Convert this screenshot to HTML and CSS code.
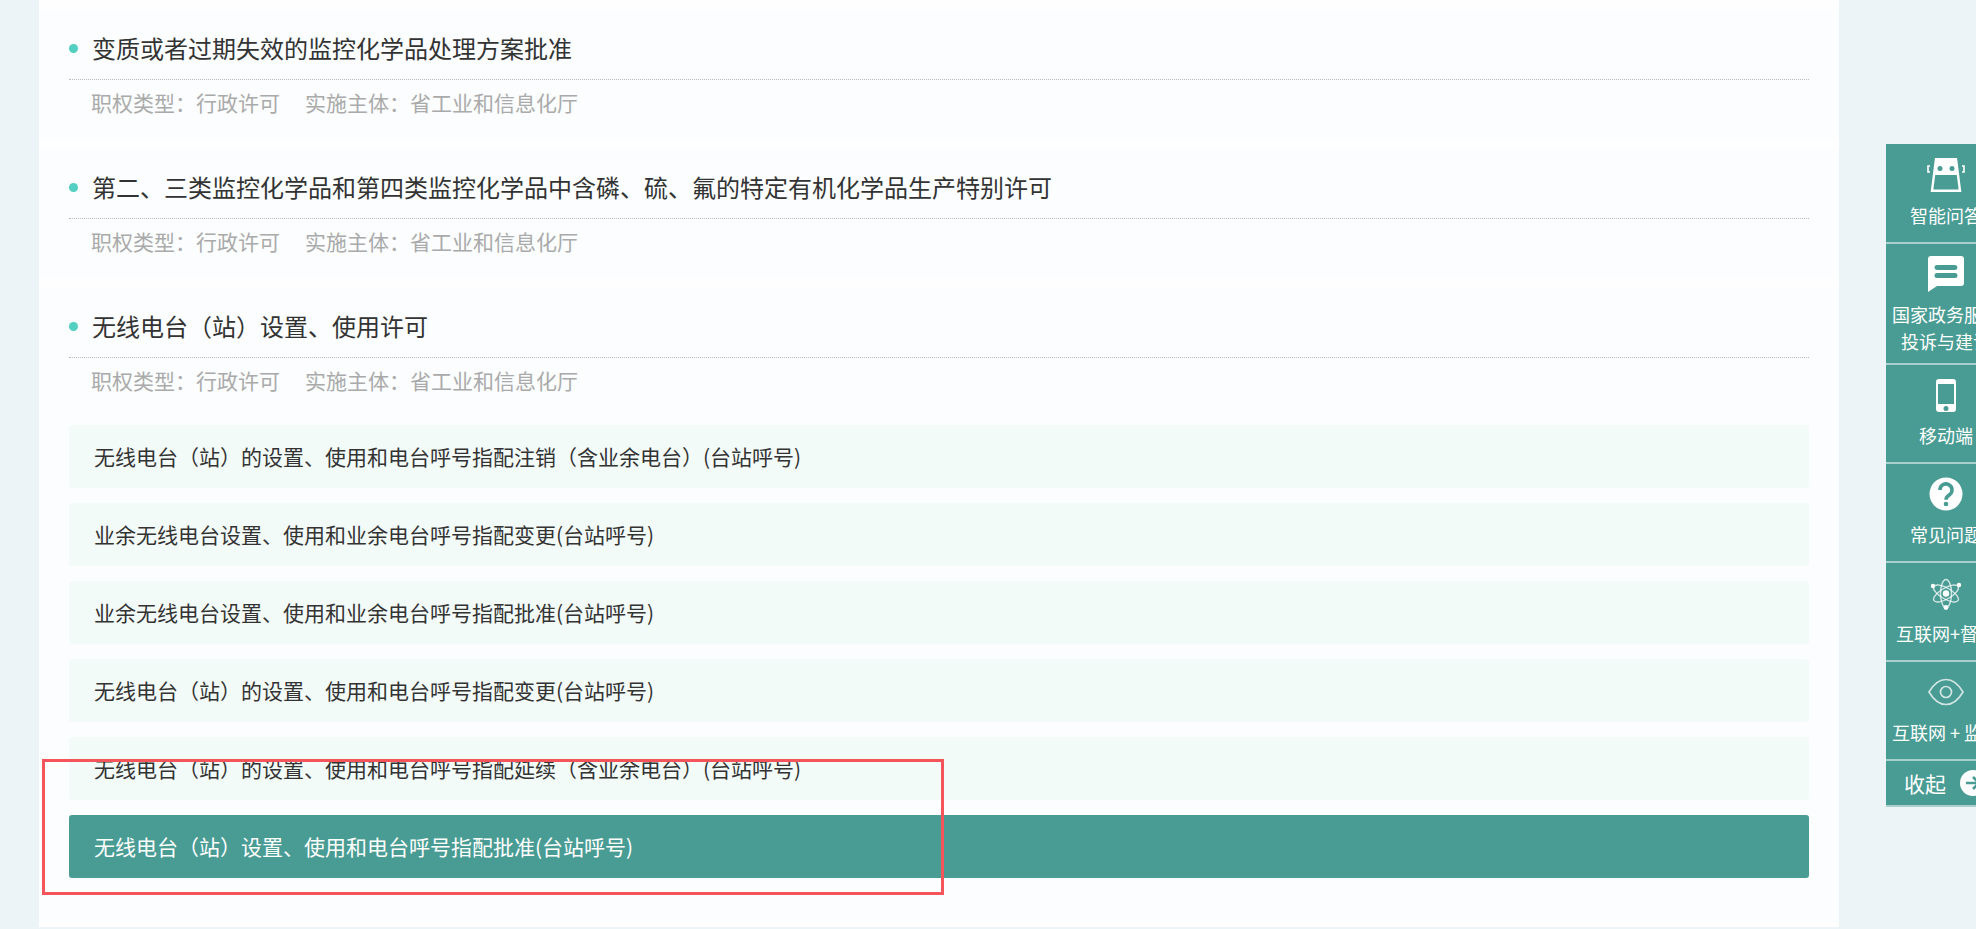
FILE: index.html
```html
<!DOCTYPE html>
<html>
    <head>
        <meta charset="UTF-8">
        <meta name="viewport" content="width=device-width, initial-scale=1">
        <title>权责清单</title>
        <link rel="stylesheet" href="styles.css">
    </head>
    <body>
        <div class="panel">
            <div class="card">
                <h3 class="card-title">变质或者过期失效的监控化学品处理方案批准</h3>
                <div class="card-meta"><span>职权类型&#xFF1A;行政许可</span><span>实施主体&#xFF1A;省工业和信息化厅</span></div>
            </div>
            <div class="card">
                <h3 class="card-title">第二、三类监控化学品和第四类监控化学品中含磷、硫、氟的特定有机化学品生产特别许可</h3>
                <div class="card-meta"><span>职权类型&#xFF1A;行政许可</span><span>实施主体&#xFF1A;省工业和信息化厅</span></div>
            </div>
            <div class="card">
                <h3 class="card-title">无线电台&#xFF08;站&#xFF09;设置、使用许可</h3>
                <div class="card-meta"><span>职权类型&#xFF1A;行政许可</span><span>实施主体&#xFF1A;省工业和信息化厅</span></div>
                <div class="sub-list">
                    <div class="sub-item">无线电台&#xFF08;站&#xFF09;的设置、使用和电台呼号指配注销&#xFF08;含业余电台&#xFF09;(台站呼号)</div>
                    <div class="sub-item">业余无线电台设置、使用和业余电台呼号指配变更(台站呼号)</div>
                    <div class="sub-item">业余无线电台设置、使用和业余电台呼号指配批准(台站呼号)</div>
                    <div class="sub-item">无线电台&#xFF08;站&#xFF09;的设置、使用和电台呼号指配变更(台站呼号)</div>
                    <div class="sub-item">无线电台&#xFF08;站&#xFF09;的设置、使用和电台呼号指配延续&#xFF08;含业余电台&#xFF09;(台站呼号)</div>
                    <div class="sub-item active">无线电台&#xFF08;站&#xFF09;设置、使用和电台呼号指配批准(台站呼号)</div>
                </div>
            </div>
        </div>

        <!-- annotation drawn over the screenshot -->
        <div class="mark"></div>

        <div class="side-bar">
            <div class="side-item">
                <div class="side-icon">
                    <svg width="38" height="34" viewBox="0 0 38 34"><path fill="none" stroke="#fff" stroke-width="2.400" d="M5 32.800 9 1.200h20l4 31.600z"/><path fill="#fff" d="M9 0h20l2.500 17h-25z"/><circle cx="13" cy="10.500" r="2.500" fill="#499c94"/><circle cx="25" cy="10.500" r="2.500" fill="#499c94"/><path fill="none" stroke="#fff" stroke-width="1.600" d="M3 8H1v6h2M35 8h2v6h-2"/></svg>
                </div>
                <div class="side-label">智能问答</div>
            </div>
            <div class="side-item">
                <div class="side-icon">
                    <svg width="36" height="36" viewBox="0 0 36 36"><path fill="#fff" d="M3 0h30a3 3 0 0 1 3 3v24a3 3 0 0 1-3 3H9l-9 6V3a3 3 0 0 1 3-3z"/><path fill="#499c94" d="M9 9h18a2 2 0 0 1 0 5H9a2 2 0 0 1 0-5zM9 17h18a2 2 0 0 1 0 5H9a2 2 0 0 1 0-5z"/></svg>
                </div>
                <div class="side-label">国家政务服务投诉与建议</div>
            </div>
            <div class="side-item">
                <div class="side-icon">
                    <svg width="20" height="33" viewBox="0 0 20 33"><path fill="#fff" fill-rule="evenodd" d="M3 0h14a3 3 0 0 1 3 3v27a3 3 0 0 1-3 3H3a3 3 0 0 1-3-3V3a3 3 0 0 1 3-3zM2 5v20h16V5zm8 22a2.500 2.500 0 1 0 0 5 2.500 2.500 0 0 0 0-5z"/></svg>
                </div>
                <div class="side-label">移动端</div>
            </div>
            <div class="side-item">
                <div class="side-icon">
                    <svg width="34" height="34" viewBox="0 0 34 34"><circle cx="17" cy="17" r="16.500" fill="#fff"/><path fill="none" stroke="#499c94" stroke-width="3.600" d="M11 13a6 6 0 1 1 9.500 4.800c-2.400 1.700-3.500 2.500-3.500 5"/><circle cx="17" cy="27" r="2.300" fill="#499c94"/></svg>
                </div>
                <div class="side-label">常见问题</div>
            </div>
            <div class="side-item">
                <div class="side-icon">
                    <svg width="32" height="33" viewBox="0 0 32 33"><g fill="none" stroke="#fff" stroke-opacity=".75" stroke-width="1.400"><ellipse cx="16" cy="16.500" rx="14" ry="5.500" transform="rotate(30 16 16.500)"/><ellipse cx="16" cy="16.500" rx="14" ry="5.500" transform="rotate(-30 16 16.500)"/><ellipse cx="16" cy="16.500" rx="14" ry="5.500" transform="rotate(90 16 16.500)"/></g><circle cx="16" cy="16.500" r="3.200" fill="#fff"/><circle cx="3" cy="9" r="2.200" fill="#fff"/><circle cx="29" cy="8" r="2.200" fill="#fff"/><circle cx="16" cy="30.500" r="2.400" fill="#fff"/></svg>
                </div>
                <div class="side-label">互联网+督查</div>
            </div>
            <div class="side-item">
                <div class="side-icon">
                    <svg width="36" height="28" viewBox="0 0 36 28"><g fill="none" stroke="#fff" stroke-opacity=".75" stroke-width="1.700"><path d="M1 14C6 5.500 12 1.500 18 1.500S30 5.500 35 14c-5 8.500-11 12.500-17 12.500S6 22.500 1 14z"/><circle cx="18" cy="14" r="5.500"/></g></svg>
                </div>
                <div class="side-label">互联网 + 监管</div>
            </div>
            <div class="side-toggle">
                <span>收起</span>
                <svg width="26" height="26" viewBox="0 0 26 26"><circle cx="13" cy="13" r="13" fill="#fff"/><path fill="none" stroke="#499c94" stroke-width="2.600" d="M6 13h13M13 7l6 6-6 6"/></svg>
            </div>
        </div>
    </body>
</html>
```

FILE: styles.css
```css
html, body {
    margin: 0;
    padding: 0;
    height: 100%;
    overflow: hidden;
    background-color: #edf4f8;
    font-family: "Noto Sans CJK SC", "Liberation Sans", sans-serif;
}
.panel {
    box-sizing: border-box;
    width: 1800px;
    height: 927px;
    margin-left: 39px;
    padding-top: 10px;
    background-color: #fefefe;
}
.card {
    padding: 18px 30px 15px;
    margin-bottom: 10px;
    background-color: #fbfdfe;
}
.card:last-child {
    margin-bottom: 0;
    padding-bottom: 45px;
}
.card-title {
    display: flex;
    align-items: center;
    margin: 0;
    padding-bottom: 11px;
    border-bottom: 1px dotted #bbb;
    font-size: 24px;
    font-weight: 400;
    line-height: 40px;
    color: #333;
}
.card-title::before {
    content: "";
    width: 9px;
    height: 9px;
    margin-right: 14px;
    border-radius: 50%;
    background-color: #52cfc1;
}
.card-meta {
    display: flex;
    gap: 25px;
    padding-left: 22px;
    font-size: 21px;
    line-height: 44px;
    color: #aaa;
}
.sub-list {
    display: flex;
    flex-direction: column;
    gap: 15px;
    margin-top: 23px;
}
.sub-item {
    height: 63px;
    padding-left: 25px;
    border-radius: 3px;
    background-color: #f3fbf9;
    font-size: 21px;
    line-height: 63px;
    color: #333;
}
.sub-item.active {
    background-color: #499c94;
    color: #fff;
}
.mark {
    position: absolute;
    top: 759px;
    left: 42px;
    width: 896px;
    height: 130px;
    border: 3px solid #f5555a;
}
.side-bar {
    position: fixed;
    top: 144px;
    left: 1886px;
    width: 120px;
    padding-top: 1px;
    background-color: #499c94;
    color: #fff;
    text-align: center;
}
.side-item {
    min-height: 77px;
    padding: 12px 0 8px;
    border-bottom: 2px solid #a8cfcb;
    font-size: 18px;
    line-height: 27px;
}
.side-icon {
    display: flex;
    align-items: center;
    justify-content: center;
    height: 36px;
    margin-bottom: 9px;
}
.side-toggle {
    display: flex;
    align-items: center;
    gap: 14px;
    height: 44px;
    padding-left: 18px;
    border-bottom: 2px solid #a8cfcb;
    font-size: 21px;
}
.side-toggle svg {
    flex: none;
}
```
